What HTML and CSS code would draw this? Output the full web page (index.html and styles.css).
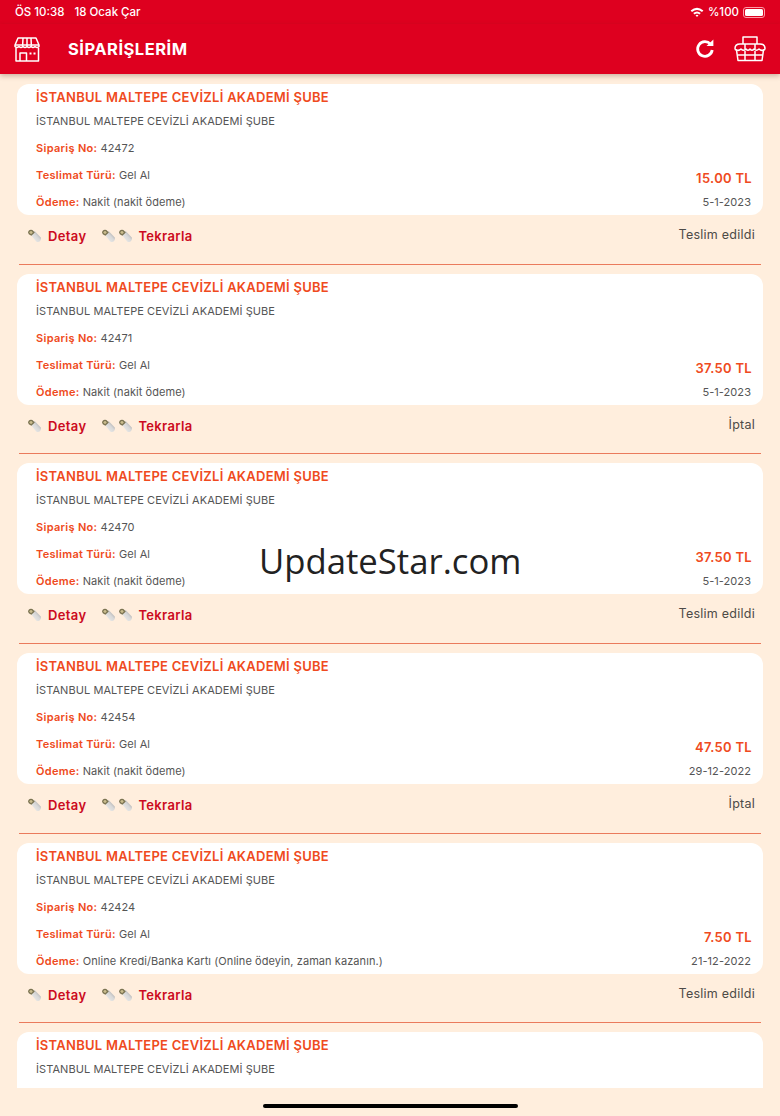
FILE: index.html
```html
<!DOCTYPE html>
<html lang="tr">
<head>
    <meta charset="UTF-8">
    <meta name="viewport" content="width=device-width, initial-scale=1.0">
    <title>Siparişlerim</title>
    <link rel="stylesheet" href="styles.css">
</head>
<body>
    <svg class="defs" width="0" height="0">
        <defs>
            <linearGradient id="torchBody" x1="0" y1="1" x2="1" y2="0">
                <stop offset="0" stop-color="#f2f2f0"/>
                <stop offset="0.55" stop-color="#d8d8d8"/>
                <stop offset="1" stop-color="#8c8c8c"/>
            </linearGradient>
        </defs>
        <symbol id="torch" viewBox="0 0 14 14">
            <path d="M3.800 5.800 L7.600 2 L13.800 8.400 Q14.200 11 12.900 12.300 Q11.200 13.600 9.200 12.400 Z" fill="url(#torchBody)"/>
            <path d="M1 3.600 Q1.200 1.800 2.600 1.100 Q4 0.500 5.400 1.100 L7.800 3.400 L4.400 6.800 L1.800 5.300 Z" fill="#7a7351"/>
            <path d="M2.200 3.400 Q2.900 2.100 4.500 2.100 L5.800 3.400 L4.100 5.200 Z" fill="#cbbd8e"/>
        </symbol>
    </svg>

    <div class="status-bar">
        <div class="status-time"><span>ÖS 10:38</span><span>18 Ocak Çar</span></div>
        <div class="status-right">
            <svg class="wifi" viewBox="0 0 14 10" width="14" height="10">
                <path d="M0.600 3.400 Q7 -1.800 13.400 3.400 L12 4.900 Q7 1 2 4.900 Z" fill="#fff"/>
                <path d="M3.200 6 Q7 2.800 10.800 6 L9.400 7.400 Q7 5.600 4.600 7.400 Z" fill="#fff"/>
                <path d="M5.500 8.300 Q7 7.100 8.500 8.300 L7 10 Z" fill="#fff"/>
            </svg>
            <span>%100</span>
            <span class="battery"><span class="battery-level"></span></span>
        </div>
    </div>

    <header class="app-bar">
        <svg class="store-icon" viewBox="0 0 26 25" width="26" height="25" fill="none" stroke="#fff" stroke-width="1.500" stroke-linejoin="round">
            <path d="M4 1 H22 L25 8 V9.500 Q23.200 11.500 21 9.500 Q19 11.500 17 9.500 Q15 11.500 13 9.500 Q11 11.500 9 9.500 Q7 11.500 5 9.500 Q2.800 11.500 1 9.500 V8 Z"/>
            <path d="M9 1 L8.600 9.500 M13 1 V9.500 M17 1 L17.400 9.500 M1 8 H25"/>
            <path d="M2 11 V24 H24.500 V11"/>
            <path d="M6 24 V16 H12.500 V24"/>
            <path d="M15.500 16.500 H17.500 M19.500 16.500 H21.500" stroke-width="2"/>
        </svg>
        <h1 class="page-title">SİPARİŞLERİM</h1>
        <div class="app-actions">
            <svg class="refresh-icon" viewBox="0 0 20 20" width="20" height="20" fill="none">
                <path d="M15.500 5.200 A7.300 7.300 0 1 0 17.200 11" stroke="#fff" stroke-width="2.800"/>
                <path d="M11.500 6.900 H18.400 V0.600 Z" fill="#fff"/>
            </svg>
            <svg class="basket-icon" viewBox="0 0 32 26" width="32" height="26" fill="none" stroke="#fff" stroke-width="1.500" stroke-linejoin="round">
                <path d="M9 8 V1 H23 V8"/>
                <path d="M6 8 H26 Q31 8 31 12.500 Q31 14 29.500 14 L28 24.500 H4 L2.500 14 Q1 14 1 12.500 Q1 8 6 8 Z"/>
                <path d="M1.500 13.500 Q4.500 15.500 7 13 Q9.500 15.500 12 13 Q14 15.500 16 13 Q18 15.500 20 13 Q22.500 15.500 25 13 Q27.500 15.500 30.500 13.500"/>
                <path d="M11 8 V13 M21 8 V13 M11 15 V24 M21 15 V24 M3.500 19 H28.500"/>
            </svg>
        </div>
    </header>

    <main class="order-list">
        <section class="order">
            <div class="order-card">
                <h2 class="shop-title">İSTANBUL MALTEPE CEVİZLİ AKADEMİ ŞUBE</h2>
                <p class="row">İSTANBUL MALTEPE CEVİZLİ AKADEMİ ŞUBE</p>
                <p class="row"><b>Sipariş No:</b> 42472</p>
                <div class="row split"><span><b>Teslimat Türü:</b> Gel Al</span><span class="price">15.00 TL</span></div>
                <div class="row split"><span><b>Ödeme:</b> Nakit (nakit ödeme)</span><span class="date">5-1-2023</span></div>
            </div>
            <div class="order-actions">
                <a class="action"><svg class="torch"><use href="#torch"/></svg>Detay</a>
                <a class="action"><svg class="torch"><use href="#torch"/></svg><svg class="torch"><use href="#torch"/></svg>Tekrarla</a>
                <span class="state">Teslim edildi</span>
            </div>
        </section>

        <section class="order">
            <div class="order-card">
                <h2 class="shop-title">İSTANBUL MALTEPE CEVİZLİ AKADEMİ ŞUBE</h2>
                <p class="row">İSTANBUL MALTEPE CEVİZLİ AKADEMİ ŞUBE</p>
                <p class="row"><b>Sipariş No:</b> 42471</p>
                <div class="row split"><span><b>Teslimat Türü:</b> Gel Al</span><span class="price">37.50 TL</span></div>
                <div class="row split"><span><b>Ödeme:</b> Nakit (nakit ödeme)</span><span class="date">5-1-2023</span></div>
            </div>
            <div class="order-actions">
                <a class="action"><svg class="torch"><use href="#torch"/></svg>Detay</a>
                <a class="action"><svg class="torch"><use href="#torch"/></svg><svg class="torch"><use href="#torch"/></svg>Tekrarla</a>
                <span class="state">İptal</span>
            </div>
        </section>

        <section class="order">
            <div class="order-card">
                <h2 class="shop-title">İSTANBUL MALTEPE CEVİZLİ AKADEMİ ŞUBE</h2>
                <p class="row">İSTANBUL MALTEPE CEVİZLİ AKADEMİ ŞUBE</p>
                <p class="row"><b>Sipariş No:</b> 42470</p>
                <div class="row split"><span><b>Teslimat Türü:</b> Gel Al</span><span class="price">37.50 TL</span></div>
                <div class="row split"><span><b>Ödeme:</b> Nakit (nakit ödeme)</span><span class="date">5-1-2023</span></div>
            </div>
            <div class="order-actions">
                <a class="action"><svg class="torch"><use href="#torch"/></svg>Detay</a>
                <a class="action"><svg class="torch"><use href="#torch"/></svg><svg class="torch"><use href="#torch"/></svg>Tekrarla</a>
                <span class="state">Teslim edildi</span>
            </div>
        </section>

        <section class="order">
            <div class="order-card">
                <h2 class="shop-title">İSTANBUL MALTEPE CEVİZLİ AKADEMİ ŞUBE</h2>
                <p class="row">İSTANBUL MALTEPE CEVİZLİ AKADEMİ ŞUBE</p>
                <p class="row"><b>Sipariş No:</b> 42454</p>
                <div class="row split"><span><b>Teslimat Türü:</b> Gel Al</span><span class="price">47.50 TL</span></div>
                <div class="row split"><span><b>Ödeme:</b> Nakit (nakit ödeme)</span><span class="date">29-12-2022</span></div>
            </div>
            <div class="order-actions">
                <a class="action"><svg class="torch"><use href="#torch"/></svg>Detay</a>
                <a class="action"><svg class="torch"><use href="#torch"/></svg><svg class="torch"><use href="#torch"/></svg>Tekrarla</a>
                <span class="state">İptal</span>
            </div>
        </section>

        <section class="order">
            <div class="order-card">
                <h2 class="shop-title">İSTANBUL MALTEPE CEVİZLİ AKADEMİ ŞUBE</h2>
                <p class="row">İSTANBUL MALTEPE CEVİZLİ AKADEMİ ŞUBE</p>
                <p class="row"><b>Sipariş No:</b> 42424</p>
                <div class="row split"><span><b>Teslimat Türü:</b> Gel Al</span><span class="price">7.50 TL</span></div>
                <div class="row split"><span><b>Ödeme:</b> Online Kredi/Banka Kartı (Online ödeyin, zaman kazanın.)</span><span class="date">21-12-2022</span></div>
            </div>
            <div class="order-actions">
                <a class="action"><svg class="torch"><use href="#torch"/></svg>Detay</a>
                <a class="action"><svg class="torch"><use href="#torch"/></svg><svg class="torch"><use href="#torch"/></svg>Tekrarla</a>
                <span class="state">Teslim edildi</span>
            </div>
        </section>

        <section class="order">
            <div class="order-card">
                <h2 class="shop-title">İSTANBUL MALTEPE CEVİZLİ AKADEMİ ŞUBE</h2>
                <p class="row">İSTANBUL MALTEPE CEVİZLİ AKADEMİ ŞUBE</p>
            </div>
        </section>
    </main>

    <div class="home-bar"></div>
    <div class="watermark">UpdateStar.com</div>
</body>
</html>
```

FILE: styles.css
```css
* {
    box-sizing: border-box;
}

body {
    font-family: Inter, "Liberation Sans", sans-serif;
    background-color: #ffeedd;
    width: 780px;
    height: 1116px;
    margin: 0;
    overflow: hidden;
    position: relative;
}

.defs {
    position: absolute;
}

.status-bar {
    background-color: #de001f;
    color: #fff;
    height: 24px;
    padding: 0 15px;
    display: flex;
    justify-content: space-between;
    align-items: center;
    font-size: 11.5px;
    font-weight: 500;
}

.status-time {
    display: flex;
    gap: 10px;
}

.status-right {
    display: flex;
    align-items: center;
    gap: 4px;
}

.battery {
    width: 22px;
    height: 11px;
    border: 1px solid #ff9aa6;
    border-radius: 3px;
    padding: 1px;
    display: flex;
}

.battery-level {
    flex: 1;
    background-color: #fff;
    border-radius: 1.5px;
}

.app-bar {
    background-color: #de001f;
    height: 50px;
    padding: 0 14px;
    display: flex;
    align-items: center;
    box-shadow: 0 2px 5px rgba(90, 40, 20, 0.3);
    position: relative;
}

.page-title {
    margin: 0 0 0 28px;
    color: #fff;
    font-size: 16.5px;
    font-weight: 700;
    letter-spacing: 0.5px;
}

.app-actions {
    margin-left: auto;
    display: flex;
    align-items: center;
    gap: 19px;
}

.order-list {
    height: 1014px;
    padding-top: 10px;
    overflow: hidden;
}

.order {
    height: 189.65px;
}

.order-card {
    margin: 0 17px;
    height: 131px;
    padding: 4px 12px 0 19px;
    background-color: #fff;
    border-radius: 12px;
}

.shop-title {
    margin: 0;
    height: 19px;
    line-height: 19px;
    font-size: 13px;
    font-weight: 600;
    letter-spacing: 0.27px;
    color: #ef4a20;
}

.row {
    margin: 0;
    height: 27px;
    line-height: 28px;
    font-size: 11px;
    letter-spacing: 0.07px;
    color: #555;
}

.row b {
    color: #ef4a20;
    font-weight: 600;
    letter-spacing: 0.3px;
}

.split {
    display: flex;
    justify-content: space-between;
}

.price {
    font-size: 13px;
    font-weight: 600;
    letter-spacing: 0.3px;
    color: #ef4a20;
    position: relative;
    top: 3px;
    left: 1px;
}

.order-actions {
    margin: 0 19px;
    height: 49.65px;
    padding: 0 6px 0 8px;
    display: flex;
    align-items: flex-start;
    border-bottom: 1px solid #ea7a5c;
    font-size: 13px;
}

.action {
    display: flex;
    align-items: center;
    height: 42px;
    margin-right: 15px;
    color: #cc0a20;
    font-weight: 600;
    letter-spacing: 0.35px;
}

.torch {
    width: 14px;
    height: 14px;
    margin-right: 3px;
}

.action .torch:last-of-type {
    margin-right: 6px;
}

.action:first-child .torch:last-of-type {
    margin-right: 7px;
}

.state {
    margin-left: auto;
    height: 39px;
    line-height: 39px;
    color: #4d4a47;
    font-size: 12.5px;
    letter-spacing: 0.25px;
}

.home-bar {
    position: absolute;
    left: 263px;
    bottom: 8px;
    width: 255px;
    height: 4px;
    border-radius: 2px;
    background-color: #000;
}

.watermark {
    position: absolute;
    left: 259px;
    top: 537px;
    font-family: "Open Sans", sans-serif;
    font-size: 34.7px;
    color: #222;
}
```
